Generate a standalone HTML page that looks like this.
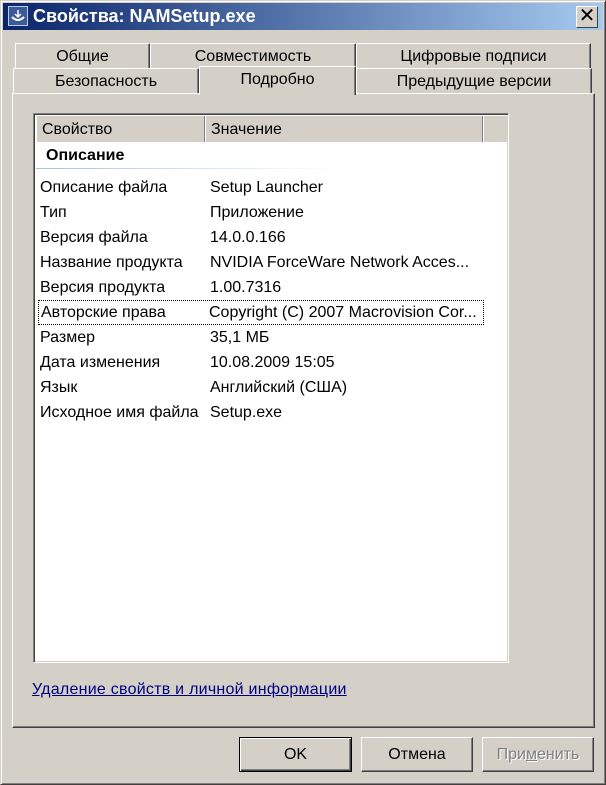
<!DOCTYPE html>
<html><head><meta charset="utf-8"><style>
*{box-sizing:border-box;margin:0;padding:0}
body{width:606px;height:785px;background:#d4d0c8;font-family:"Liberation Sans",sans-serif;font-size:16px;color:#000;position:relative;overflow:hidden}
.abs{position:absolute}
.win{left:0;top:0;width:606px;height:785px;border:1px solid;border-color:#d4d0c8 #404040 #404040 #d4d0c8;box-shadow:inset 1px 1px 0 #fff,inset -1px -1px 0 #808080}
.title{left:3px;top:3px;width:600px;height:27px;background:linear-gradient(90deg,#0a246a,#a6caf0);color:#fff;font-weight:bold;font-size:18px;line-height:27px;padding-left:30px}
.close{left:576px;top:6px;width:22px;height:22px;background:#d4d0c8;border:1px solid;border-color:#fff #404040 #404040 #fff;font-size:20px;line-height:19px;text-align:center;color:#000}
.tab{height:25px;background:#d4d0c8;border-top:1px solid #fff;border-left:1px solid #fff;border-right:1px solid #404040;box-shadow:inset -1px 0 0 #808080;text-align:center;line-height:25px}
.panel{left:12px;top:93px;width:583px;height:635px;border:1px solid;border-color:#fff #404040 #404040 #fff;box-shadow:inset -1px -1px 0 #808080}
.list{left:33px;top:113px;width:476px;height:550px;background:#fff;border:1px solid;border-color:#808080 #fff #fff #808080;box-shadow:inset 1px 1px 0 #404040,inset -1px -1px 0 #d4d0c8}
.hdr{top:2px;height:26px;background:#d4d0c8;border-right:1px solid #808080;border-left:1px solid #fff;line-height:28px;padding-left:5px}
.row{left:6px;height:25px;line-height:25px;width:440px}
.row span{position:absolute;left:170px}
.btn{top:737px;height:35px;border:1px solid;border-color:#fff #404040 #404040 #fff;box-shadow:inset -1px -1px 0 #808080;text-align:center;line-height:33px}
</style></head><body>
<div class="abs win"></div>
<div class="abs title">Свойства: NAMSetup.exe</div>
<svg class="abs" style="left:8px;top:6px" width="20" height="20"><rect x="0.5" y="0.5" width="19" height="19" fill="#3a5a9a" stroke="#c0c8e0"/><path d="M4 11 Q10 17 16 11" stroke="#fff" stroke-width="2" fill="none"/><path d="M10 4 V11 M7 8 L10 11 L13 8" stroke="#fff" stroke-width="1.5" fill="none"/></svg>
<div class="abs close">✕</div>
<div class="abs tab" style="left:15px;top:43px;width:135px">Общие</div>
<div class="abs tab" style="left:150px;top:43px;width:206px">Совместимость</div>
<div class="abs tab" style="left:356px;top:43px;width:235px">Цифровые подписи</div>
<div class="abs panel"></div>
<div class="abs tab" style="left:13px;top:68px;width:186px">Безопасность</div>
<div class="abs tab" style="left:356px;top:68px;width:236px">Предыдущие версии</div>
<div class="abs tab" style="left:199px;top:66px;width:157px;height:29px;line-height:25px;border-bottom:none">Подробно</div>
<div class="abs list">
<div class="abs hdr" style="left:2px;width:169px">Свойство</div>
<div class="abs hdr" style="left:171px;width:278px">Значение</div>
<div class="abs hdr" style="left:449px;width:25px;border-right:none"></div>
<div class="abs" style="left:12px;top:28px;height:27px;line-height:27px;font-weight:bold">Описание</div>
<div class="abs" style="left:2px;top:54px;width:300px;height:1px;background:linear-gradient(90deg,#9ec4ea,#fff)"></div>
<div class="abs row" style="top:61px">Описание файла<span>Setup Launcher</span></div>
<div class="abs row" style="top:86px">Тип<span>Приложение</span></div>
<div class="abs row" style="top:111px">Версия файла<span>14.0.0.166</span></div>
<div class="abs row" style="top:136px">Название продукта<span>NVIDIA ForceWare Network Acces...</span></div>
<div class="abs row" style="top:161px">Версия продукта<span>1.00.7316</span></div>
<div class="abs row" style="top:186px;left:4px;width:446px;padding-left:2px;border:1px dotted #000;line-height:23px">Авторские права<span style="left:170px">Copyright (C) 2007 Macrovision Cor...</span></div>
<div class="abs row" style="top:211px">Размер<span>35,1 МБ</span></div>
<div class="abs row" style="top:236px">Дата изменения<span>10.08.2009 15:05</span></div>
<div class="abs row" style="top:261px">Язык<span>Английский (США)</span></div>
<div class="abs row" style="top:286px">Исходное имя файла<span>Setup.exe</span></div>
</div>
<div class="abs" style="left:32px;top:681px;color:#00007f;text-decoration:underline;letter-spacing:0.25px">Удаление свойств и личной информации</div>
<div class="abs btn" style="left:239px;width:113px;border:1px solid #000;box-shadow:inset 1px 1px 0 #fff,inset -1px -1px 0 #404040,inset -2px -2px 0 #808080">OK</div>
<div class="abs btn" style="left:361px;width:112px">Отмена</div>
<div class="abs btn" style="left:482px;width:112px;color:#808080;text-shadow:1px 1px 0 #fff">При<u>м</u>енить</div>
</body></html>
